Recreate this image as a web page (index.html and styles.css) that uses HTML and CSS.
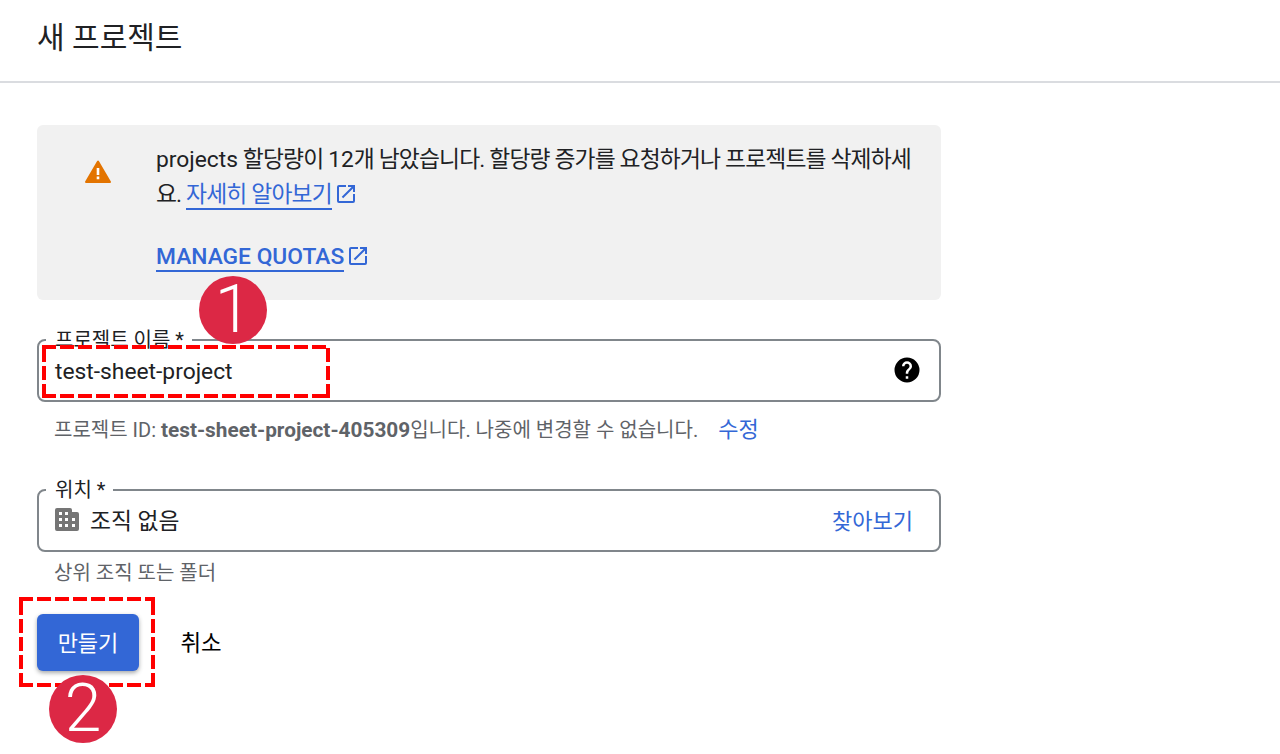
FILE: index.html
```html
<!DOCTYPE html>
<html lang="ko">
<head>
    <meta charset="UTF-8">
    <title>새 프로젝트</title>
    <link rel="stylesheet" href="styles.css">
</head>
<body>
    <header class="page-header">
        <h1>새 프로젝트</h1>
    </header>

    <main class="content">
        <div class="notice">
            <svg class="notice-icon" viewBox="0 0 26 23" width="26" height="23">
                <path fill="#e37400" stroke="#e37400" stroke-width="2" stroke-linejoin="round" d="M1 22h24L13 1.5z"/>
                <path fill="#fff" d="M11.7 8h2.6v7h-2.6zM11.7 16.5h2.6v2.7h-2.6z"/>
            </svg>
            <div class="notice-body">
                <p><span class="latin">projects</span> 할당량이 <span class="latin">12</span>개 남았습니다. 할당량 증가를 요청하거나 프로젝트를 삭제하세요. <a href="#" class="link">자세히 알아보기</a><svg class="ext" viewBox="0 0 24 24" width="24" height="24"><path d="M19 19H5V5h7V3H5a2 2 0 0 0-2 2v14a2 2 0 0 0 2 2h14a2 2 0 0 0 2-2v-7h-2v7zM14 3v2h3.59l-9.83 9.83 1.41 1.41L19 6.41V10h2V3h-7z"/></svg></p>
                <p class="quota-line"><a href="#" class="link strong">MANAGE QUOTAS</a><svg class="ext" viewBox="0 0 24 24" width="24" height="24"><path d="M19 19H5V5h7V3H5a2 2 0 0 0-2 2v14a2 2 0 0 0 2 2h14a2 2 0 0 0 2-2v-7h-2v7zM14 3v2h3.59l-9.83 9.83 1.41 1.41L19 6.41V10h2V3h-7z"/></svg></p>
            </div>
        </div>

        <fieldset class="field first">
            <legend>프로젝트 이름 *</legend>
            <div class="field-row">
                <span class="field-value">test-sheet-project</span>
                <svg class="help" viewBox="0 0 24 24" width="30" height="30"><path d="M12 2a10 10 0 1 0 0 20 10 10 0 0 0 0-20zm1 17h-2v-2h2v2zm2.07-7.75-.9.92C13.45 12.9 13 13.5 13 15h-2v-.5c0-1.1.45-2.1 1.17-2.83l1.24-1.26A2 2 0 0 0 14 9a2 2 0 0 0-4 0H8a4 4 0 0 1 8 0c0 .88-.36 1.68-.93 2.25z"/></svg>
            </div>
        </fieldset>
        <p class="hint hint-id">프로젝트 ID: <b>test-sheet-project-405309</b>입니다. 나중에 변경할 수 없습니다. <a href="#" class="action edit">수정</a></p>

        <fieldset class="field second">
            <legend>위치 *</legend>
            <div class="field-row">
                <svg class="org" viewBox="0 0 24 23" width="24" height="23"><path fill-rule="evenodd" d="M2 0h13a2 2 0 0 1 2 2v2h5a2 2 0 0 1 2 2v15a2 2 0 0 1-2 2H2a2 2 0 0 1-2-2V2a2 2 0 0 1 2-2zM4 4v3h3V4zM10 4v3h3V4zM4 10v3h3v-3zM10 10v3h3v-3zM17 10v3h3v-3zM4 16v3h3v-3zM10 16v3h3v-3zM17 16v3h3v-3z"/></svg>
                <span class="field-value">조직 없음</span>
                <a href="#" class="action browse">찾아보기</a>
            </div>
        </fieldset>
        <p class="hint hint-parent">상위 조직 또는 폴더</p>

        <div class="buttons">
            <button class="btn-create">만들기</button>
            <button class="btn-cancel">취소</button>
        </div>
    </main>

    <!-- 설명용 표시 -->
    <div class="mark-box box-one"></div>
    <div class="mark-box box-two"></div>
    <div class="badge badge-one">1</div>
    <div class="badge badge-two">2</div>
</body>
</html>
```

FILE: styles.css
```css
* {
    box-sizing: border-box;
}
body {
    margin: 0;
    height: 754px;
    overflow: hidden;
    position: relative;
    background-color: #fff;
    color: #202124;
    font-family: Roboto, "Noto Sans CJK KR", sans-serif;
    font-size: 22.4px;
}
.page-header {
    height: 83px;
    padding: 18px 37px 0;
    border-bottom: 2px solid #dadce0;
}
h1 {
    margin: 0;
    font-size: 30px;
    font-weight: 400;
    line-height: 40px;
}
.content {
    width: 904px;
    margin-left: 37px;
    padding-top: 42px;
}
.notice {
    display: flex;
    height: 175px;
    background-color: #f1f1f1;
    border-radius: 6px;
}
.notice-icon {
    flex: none;
    margin: 35px 0 0 48px;
}
.notice-body {
    margin-left: 45px;
    width: 760px;
    padding-top: 17px;
}
.notice-body p {
    margin: 0;
    line-height: 35px;
    font-size: 22.8px;
    letter-spacing: -0.85px;
}
.notice-body .latin {
    letter-spacing: 0;
}
.notice-body .quota-line {
    margin-top: 27px;
    letter-spacing: 0;
}
.link {
    color: #3367d6;
    text-decoration: none;
    border-bottom: 2px solid #3367d6;
}
.strong {
    font-weight: 500;
}
.ext {
    fill: #3367d6;
    margin-left: 2px;
    vertical-align: -4px;
}
.field {
    margin: 0;
    padding: 0 16px;
    border: 2px solid #80868b;
    border-radius: 8px;
    min-width: 0;
}
.field.first {
    margin-top: 27px;
    height: 75px;
}
.field.second {
    margin-top: 32px;
    height: 75px;
}
legend {
    padding: 0 8px 0 9px;
    margin-left: -9px;
    font-size: 20px;
    line-height: 26px;
    color: #202124;
}
.field-row {
    display: flex;
    align-items: center;
    height: 46px;
    margin-top: -5px;
}
.second .field-row {
    margin-top: -7px;
}
.field-value {
    flex: 1;
    font-size: 22.8px;
}
.help {
    flex: none;
    margin-right: 1px;
    margin-top: -2px;
}
.org {
    flex: none;
    fill: #757575;
    margin-right: 11px;
}
.hint {
    margin: 0;
    padding-left: 17px;
    font-size: 20px;
    color: #5f6368;
}
.hint b {
    font-size: 20.8px;
}
.hint-id {
    padding-top: 13px;
    line-height: 30px;
}
.hint-parent {
    padding-top: 6px;
    line-height: 30px;
}
.action {
    color: #3367d6;
    text-decoration: none;
}
.edit {
    font-size: 22px;
    margin-left: 15px;
}
.browse {
    font-size: 22px;
    margin-right: 10px;
}
.buttons {
    display: flex;
    align-items: center;
    gap: 26px;
    margin-top: 26px;
}
.btn-create {
    width: 102px;
    height: 57px;
    padding: 0 0 3px;
    border: none;
    border-radius: 6px;
    background-color: #3367d6;
    color: #fff;
    font: inherit;
    font-size: 22px;
    box-shadow: 0 2px 4px rgba(60, 64, 67, 0.45);
}
.btn-cancel {
    width: 72px;
    height: 57px;
    padding: 0 0 3px;
    border: none;
    background: none;
    color: #000;
    font: inherit;
}
.mark-box {
    position: absolute;
    background-image:
        repeating-linear-gradient(90deg, #f00 0 14px, transparent 14px 18px),
        repeating-linear-gradient(90deg, #f00 0 14px, transparent 14px 18px),
        repeating-linear-gradient(0deg, #f00 0 14px, transparent 14px 18px),
        repeating-linear-gradient(0deg, #f00 0 14px, transparent 14px 18px);
    background-size: 100% 4px, 100% 4px, 4px 100%, 4px 100%;
    background-position: 0 0, 0 100%, 0 0, 100% 0;
    background-repeat: no-repeat;
}
.box-one {
    left: 42px;
    top: 345px;
    width: 288px;
    height: 53px;
}
.box-two {
    left: 19px;
    top: 597px;
    width: 136px;
    height: 90px;
}
.badge {
    position: absolute;
    width: 68px;
    height: 68px;
    border-radius: 50%;
    background-color: #dc2845;
    color: #fff;
    font-size: 66px;
    font-weight: 300;
    line-height: 68px;
    text-align: center;
}
.badge-one {
    left: 199px;
    top: 276px;
}
.badge-two {
    left: 49px;
    top: 675px;
}
```
